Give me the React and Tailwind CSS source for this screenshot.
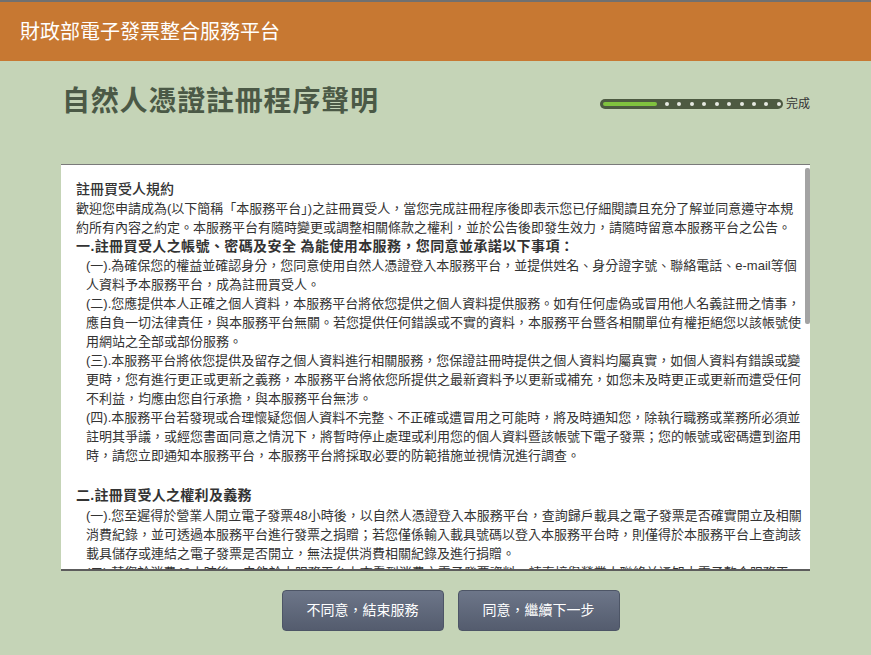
import React from "react";

const intro = [
  "歡迎您申請成為(以下簡稱「本服務平台」)之註冊買受人，當您完成註冊程序後即表示您已仔細閱讀且充分了解並同意遵守本規",
  "約所有內容之約定。本服務平台有隨時變更或調整相關條款之權利，並於公告後即發生效力，請隨時留意本服務平台之公告。",
];

const sectionOne = [
  [
    "(一).為確保您的權益並確認身分，您同意使用自然人憑證登入本服務平台，並提供姓名、身分證字號、聯絡電話、e-mail等個",
    "人資料予本服務平台，成為註冊買受人。",
  ],
  [
    "(二).您應提供本人正確之個人資料，本服務平台將依您提供之個人資料提供服務。如有任何虛偽或冒用他人名義註冊之情事，",
    "應自負一切法律責任，與本服務平台無關。若您提供任何錯誤或不實的資料，本服務平台暨各相關單位有權拒絕您以該帳號使",
    "用網站之全部或部份服務。",
  ],
  [
    "(三).本服務平台將依您提供及留存之個人資料進行相關服務，您保證註冊時提供之個人資料均屬真實，如個人資料有錯誤或變",
    "更時，您有進行更正或更新之義務，本服務平台將依您所提供之最新資料予以更新或補充，如您未及時更正或更新而遭受任何",
    "不利益，均應由您自行承擔，與本服務平台無涉。",
  ],
  [
    "(四).本服務平台若發現或合理懷疑您個人資料不完整、不正確或遭冒用之可能時，將及時通知您，除執行職務或業務所必須並",
    "註明其爭議，或經您書面同意之情況下，將暫時停止處理或利用您的個人資料暨該帳號下電子發票；您的帳號或密碼遭到盜用",
    "時，請您立即通知本服務平台，本服務平台將採取必要的防範措施並視情況進行調查。",
  ],
];

const sectionTwo = [
  [
    "(一).您至遲得於營業人開立電子發票48小時後，以自然人憑證登入本服務平台，查詢歸戶載具之電子發票是否確實開立及相關",
    "消費紀錄，並可透過本服務平台進行發票之捐贈；若您僅係輸入載具號碼以登入本服務平台時，則僅得於本服務平台上查詢該",
    "載具儲存或連結之電子發票是否開立，無法提供消費相關紀錄及進行捐贈。",
  ],
  [
    "(二).若您於消費48小時後，未能於本服務平台上查看到消費之電子發票資料，請直接與營業人聯絡並通知本電子整合服務平",
  ],
];

const Item = ({ lines }) => (
  <div className="pl-[10px]">
    {lines.map((line) => (
      <div key={line} className="whitespace-nowrap">
        {line}
      </div>
    ))}
  </div>
);

const Progress = () => {
  const dots = [0, 1, 2, 3, 4, 5, 6, 7, 8, 9];
  return (
    <div className="flex items-center mt-[4px]">
      <div className="w-[183px] h-[10px] rounded-full bg-[#4d5a41] flex items-center pl-[3px] pr-[2px]">
        <div className="w-[54px] h-[4px] rounded-full bg-[#80c23f]" />
        <div className="flex-1 flex justify-between items-center ml-[8px]">
          {dots.map((d) => (
            <div key={d} className="w-[4px] h-[4px] rounded-full bg-[#e6e9e2]" />
          ))}
        </div>
      </div>
      <span className="ml-[3px] text-[12px] text-[#333] leading-none">完成</span>
    </div>
  );
};

export default function App() {
  return (
    <div className="min-h-screen bg-[#c5d4b7] font-['Liberation_Sans','Noto_Sans_CJK_TC',sans-serif]">
      {/* header */}
      <div className="h-[61px] bg-[#c77832] border-t-2 border-[#707070] flex items-center px-[20px]">
        <h1 className="text-[20px] text-white leading-none">財政部電子發票整合服務平台</h1>
      </div>

      <div className="w-[749px] mx-auto">
        <div className="flex items-center justify-between pt-[24px] pl-[1px]">
          <h2 className="text-[28px] font-bold text-[#4b5946] leading-[34px] tracking-[0.8px]">
            自然人憑證註冊程序聲明
          </h2>
          <Progress />
        </div>

        {/* terms panel */}
        <div className="relative mt-[45px] h-[407px] bg-white border-t border-b-2 border-t-[#7a7a7a] border-b-[#5c5c5c] overflow-hidden">
          <div className="pt-[15px] pl-[15px] text-[13px] leading-[19px] text-[#333]">
            <div className="text-[14px] font-medium">註冊買受人規約</div>
            {intro.map((line) => (
              <div key={line} className="whitespace-nowrap">
                {line}
              </div>
            ))}
            <div className="text-[14px] font-bold tracking-[0.4px]">
              一.註冊買受人之帳號、密碼及安全 為能使用本服務，您同意並承諾以下事項：
            </div>
            {sectionOne.map((lines) => (
              <Item key={lines[0]} lines={lines} />
            ))}
            <div className="h-[19px]" />
            <div className="text-[14px] font-bold leading-[21px] mt-[1px] tracking-[0.3px]">
              二.註冊買受人之權利及義務
            </div>
            {sectionTwo.map((lines) => (
              <Item key={lines[0]} lines={lines} />
            ))}
          </div>
          {/* scrollbar thumb */}
          <div className="absolute right-0 top-[3px] w-[5px] h-[156px] rounded-[2px] bg-[#a3a3a3]" />
        </div>

        {/* actions */}
        <div className="flex justify-center gap-[14px] pl-[30px] mt-[19px]">
          <button className="w-[162px] h-[41px] rounded-[4px] border border-[#4d5566] bg-gradient-to-b from-[#6d7689] to-[#545c6e] text-white text-[14px]">
            不同意，結束服務
          </button>
          <button className="w-[162px] h-[41px] rounded-[4px] border border-[#4d5566] bg-gradient-to-b from-[#6d7689] to-[#545c6e] text-white text-[14px]">
            同意，繼續下一步
          </button>
        </div>
      </div>
    </div>
  );
}
